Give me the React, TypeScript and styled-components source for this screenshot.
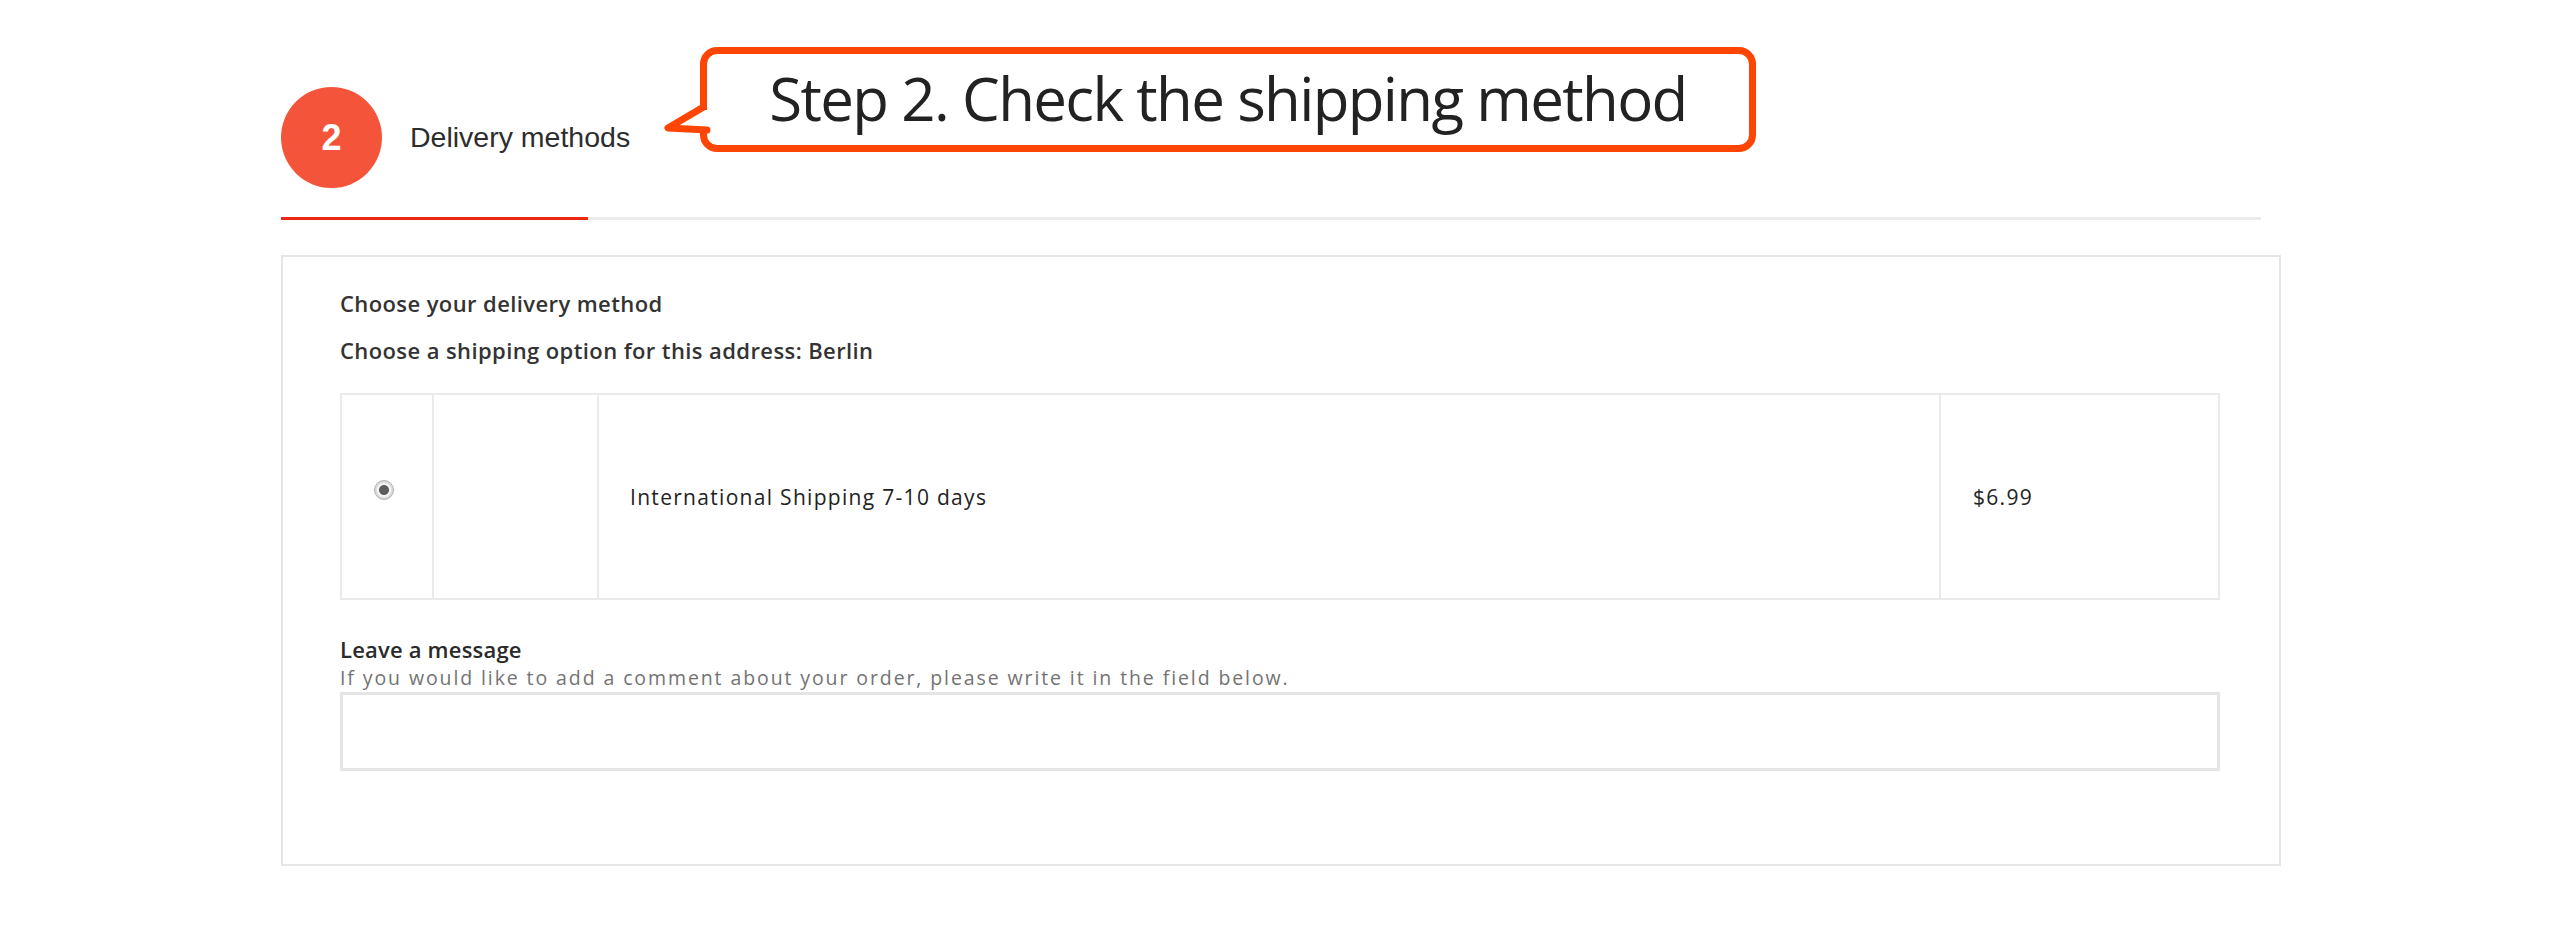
import styled, { createGlobalStyle } from "styled-components"

const GlobalStyle = createGlobalStyle`
  html, body { margin: 0; padding: 0; background: #fff; }
  body { font-family: "Open Sans", "Liberation Sans", sans-serif; color: #333; }
`

const Page = styled.div`
  position: relative;
  min-height: 928px;
  padding: 87px 0 0 281px;
  box-sizing: border-box;
`

const Wrapper = styled.div`width: 2000px;`

const StepHeader = styled.div`
  display: flex; align-items: center; gap: 28px; height: 101px;
`
const StepCircle = styled.div`
  width: 101px; height: 101px; border-radius: 50%;
  background: #f4553a; color: #fff;
  display: flex; align-items: center; justify-content: center;
  font-family: "Liberation Sans", Arial, sans-serif; font-weight: 700; font-size: 36px;
`
const StepTitle = styled.span`
  font-family: "Liberation Sans", Arial, sans-serif;
  font-size: 28.5px; color: #2d2d2d;
`

const TabLine = styled.div`
  margin-top: 29px; width: 1980px; height: 3px; background: #ebebeb;
`
const TabActive = styled.div`width: 307px; height: 3px; background: #ec2812;`

const Panel = styled.section`
  margin-top: 35px;
  border: 2px solid #e6e6e6;
  box-sizing: border-box;
  width: 2000px;
  padding: 31px 59px 93px 57px;
`

const Heading = styled.div<{ $gap?: number }>`
  font-size: 22px; font-weight: 600; line-height: 30px; color: #333;
  letter-spacing: 0.4px;
  margin-top: ${p => p.$gap ?? 0}px;
`

const Table = styled.table`
  width: 100%; border-collapse: collapse; margin-top: 28px;
`
const Td = styled.td<{ $w?: number; $pl?: number }>`
  border: 2px solid #ebebeb;
  height: 205px;
  padding: 0 0 0 ${p => p.$pl ?? 0}px;
  width: ${p => (p.$w ? `${p.$w}px` : "auto")};
  font-size: 21px; letter-spacing: 1.3px; color: #222;
  vertical-align: middle;
  box-sizing: border-box;
`
const RadioCell = styled.div`display: flex; justify-content: center; padding-right: 6px; margin-bottom: 14px;`
const Radio = styled.span`
  width: 20px; height: 20px; border-radius: 50%;
  border: 1px solid #b4b4b4; box-sizing: border-box;
  background: radial-gradient(circle, #5d5d5d 0 4.5px, #f4f4f4 5.5px 6.5px, #d9d9d9 8px);
`

const MessageLabel = styled.div`
  font-size: 22px; font-weight: 600; line-height: 28px; color: #2a2a2a;
  letter-spacing: 0.2px; margin-top: 35px;
`
const MessageHint = styled.div`
  font-size: 19.5px; letter-spacing: 1.9px; color: #737373; line-height: 26px; margin-top: 2px;
`
const TextArea = styled.textarea`
  display: block; width: 100%; height: 79px; box-sizing: border-box;
  border: 3px solid #e5e5e5; resize: none; outline: none; margin-top: 1px;
  font-family: inherit; font-size: 18px;
`

const Callout = styled.div`
  position: absolute; left: 700px; top: 47px;
  width: 1056px; height: 105px; box-sizing: border-box;
  border: 7px solid #ff4503; border-radius: 17px; background: #fff;
  display: flex; align-items: center; justify-content: center;
  font-family: "Open Sans", sans-serif; font-size: 60px; letter-spacing: -1.65px; color: #222;
  padding-bottom: 4px;
`
const CalloutTail = styled.svg`
  position: absolute; left: -54px; top: -4px;
`

export default function App() {
  return (
    <>
      <GlobalStyle />
      <Page>
        <Wrapper>
          <StepHeader>
            <StepCircle>2</StepCircle>
            <StepTitle>Delivery methods</StepTitle>
          </StepHeader>
          <TabLine><TabActive /></TabLine>

          <Panel>
            <Heading>Choose your delivery method</Heading>
            <Heading $gap={17}>Choose a shipping option for this address: Berlin</Heading>
            <Table>
              <tbody>
                <tr>
                  <Td $w={92}><RadioCell><Radio /></RadioCell></Td>
                  <Td $w={165} />
                  <Td $pl={31}>International Shipping 7-10 days</Td>
                  <Td $w={279} $pl={32}>$6.99</Td>
                </tr>
              </tbody>
            </Table>
            <MessageLabel>Leave a message</MessageLabel>
            <MessageHint>If you would like to add a comment about your order, please write it in the field below.</MessageHint>
            <TextArea />
          </Panel>
        </Wrapper>

        <Callout>
          <CalloutTail width="64" height="100" viewBox="0 0 64 100">
            <polygon points="50.5,57 15,78 50.5,80" fill="#fff" />
            <rect x="46" y="60" width="9" height="18" fill="#fff" />
            <polyline points="50.5,57 15,78 54,80" fill="none" stroke="#ff4503" strokeWidth="7" strokeLinejoin="round" strokeLinecap="round" />
          </CalloutTail>
          Step 2. Check the shipping method
        </Callout>
      </Page>
    </>
  )
}
